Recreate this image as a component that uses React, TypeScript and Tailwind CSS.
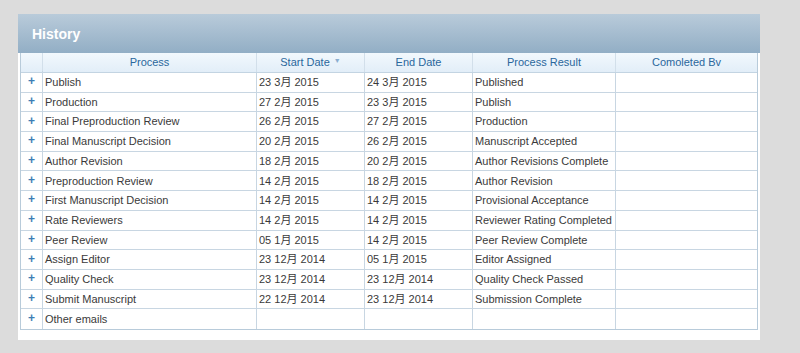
import React from "react";

const rows: [string, string, string, string][] = [
  ["Publish", "23 3月 2015", "24 3月 2015", "Published"],
  ["Production", "27 2月 2015", "23 3月 2015", "Publish"],
  ["Final Preproduction Review", "26 2月 2015", "27 2月 2015", "Production"],
  ["Final Manuscript Decision", "20 2月 2015", "26 2月 2015", "Manuscript Accepted"],
  ["Author Revision", "18 2月 2015", "20 2月 2015", "Author Revisions Complete"],
  ["Preproduction Review", "14 2月 2015", "18 2月 2015", "Author Revision"],
  ["First Manuscript Decision", "14 2月 2015", "14 2月 2015", "Provisional Acceptance"],
  ["Rate Reviewers", "14 2月 2015", "14 2月 2015", "Reviewer Rating Completed"],
  ["Peer Review", "05 1月 2015", "14 2月 2015", "Peer Review Complete"],
  ["Assign Editor", "23 12月 2014", "05 1月 2015", "Editor Assigned"],
  ["Quality Check", "23 12月 2014", "23 12月 2014", "Quality Check Passed"],
  ["Submit Manuscript", "22 12月 2014", "23 12月 2014", "Submission Complete"],
  ["Other emails", "", "", ""],
];

const font = { fontFamily: '"Liberation Sans", "Noto Sans CJK SC", sans-serif' };

export default function App() {
  return (
    <div className="w-[800px] h-[353px] bg-[#dcdcdc] pt-[14px] pl-[18px]" style={font}>
      <div className="w-[742px] h-[326px] bg-white flex flex-col">
        <div className="h-[39px] bg-gradient-to-b from-[#b9cbda] to-[#92aec5] flex items-center pl-[14px] pt-[1px]">
          <span className="text-white font-bold text-[14px]">History</span>
        </div>
        <div className="mx-[2px] border border-[#b8cbda] border-t-0 flex flex-col">
          <div className="flex h-[20px] bg-gradient-to-b from-[#f2f8fd] to-[#e2eef8] border-b border-[#c3d4e2] text-[11px] text-[#2a679c]">
            <div className="w-[22px] border-r border-[#d2dfea]" />
            <div className="w-[214px] border-r border-[#d2dfea] flex items-center justify-center">Process</div>
            <div className="w-[108px] border-r border-[#d2dfea] flex items-center justify-center gap-[4px]">
              Start Date
              <span className="text-[7px] text-[#8aaed0] leading-none -mt-[4px]">▼</span>
            </div>
            <div className="w-[108px] border-r border-[#d2dfea] flex items-center justify-center">End Date</div>
            <div className="w-[143px] border-r border-[#d2dfea] flex items-center justify-center">Process Result</div>
            <div className="flex-1 flex items-center justify-center">Comoleted Bv</div>
          </div>
          {rows.map((r, i) => (
            <div
              key={i}
              className={`flex h-[19.7px] text-[11px] text-[#3a3a3a] ${i < rows.length - 1 ? "border-b border-[#c8d6e2]" : ""}`}
            >
              <div className="w-[22px] border-r border-[#c8d6e2] flex items-center justify-center text-[#3d7db4] font-bold text-[12px] -mt-[2px]">+</div>
              <div className="w-[214px] border-r border-[#c8d6e2] flex items-center pl-[2px]">{r[0]}</div>
              <div className="w-[108px] border-r border-[#c8d6e2] flex items-center pl-[2px]">{r[1]}</div>
              <div className="w-[108px] border-r border-[#c8d6e2] flex items-center pl-[2px]">{r[2]}</div>
              <div className="w-[143px] border-r border-[#c8d6e2] flex items-center pl-[2px]">{r[3]}</div>
              <div className="flex-1" />
            </div>
          ))}
        </div>
      </div>
    </div>
  );
}
